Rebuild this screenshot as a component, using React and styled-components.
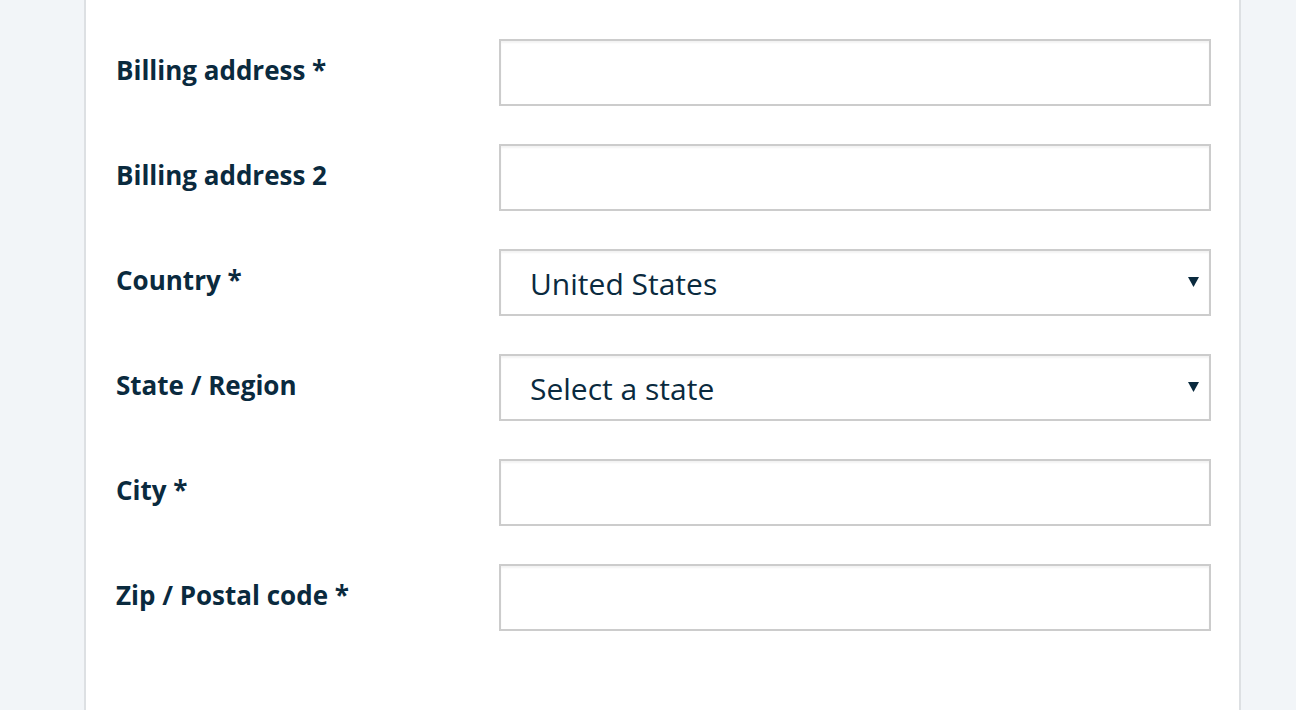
import React from 'react';
import styled, { createGlobalStyle } from 'styled-components';

const colors = {
    page: '#f2f5f8',
    card: '#ffffff',
    cardEdge: '#dde0e3',
    ink: '#0a2a3e',
    field: '#cccccc',
};

const GlobalStyle = createGlobalStyle`
    html, body {
        margin: 0;
        padding: 0;
        background: ${colors.page};
        font-family: "Open Sans", "Liberation Sans", sans-serif;
        color: ${colors.ink};
    }
`;

const fields = [
    { label: 'Billing address *', type: 'text' },
    { label: 'Billing address 2', type: 'text' },
    { label: 'Country *', type: 'select', value: 'United States' },
    { label: 'State / Region', type: 'select', value: 'Select a state' },
    { label: 'City *', type: 'text' },
    { label: 'Zip / Postal code *', type: 'text' },
];

const App = () => {
    return (
        <Page>
            <GlobalStyle />
            <Card>
                <Form>
                    {fields.map((f) => (
                        <Row key={f.label}>
                            <Label>{f.label}</Label>
                            {f.type === 'select' ? (
                                <SelectWrap>
                                    <Select defaultValue={f.value}>
                                        <option>{f.value}</option>
                                    </Select>
                                    <Arrow viewBox="0 0 11 11">
                                        <path d="M0 1 H11 L5.5 11 Z" fill={colors.ink} />
                                    </Arrow>
                                </SelectWrap>
                            ) : (
                                <Input type="text" />
                            )}
                        </Row>
                    ))}
                </Form>
            </Card>
        </Page>
    );
};

export default App;

const Page = styled.div`
    min-height: 710px;
    display: flex;
    padding-left: 84px;
`;

const Card = styled.div`
    width: 1157px;
    min-height: 710px;
    background: ${colors.card};
    border-left: 2px solid ${colors.cardEdge};
    border-right: 2px solid ${colors.cardEdge};
    padding: 39px 28px 0 30px;
    box-sizing: border-box;
`;

const Form = styled.div`
    display: flex;
    flex-direction: column;
    gap: 38px;
`;

const Row = styled.div`
    display: grid;
    grid-template-columns: 383px 712px;
    align-items: center;
`;

const Label = styled.label`
    font-size: 26px;
    font-weight: 700;
    margin-top: -5px;
`;

const fieldBox = `
    height: 67px;
    width: 712px;
    box-sizing: border-box;
    border: 2px solid ${colors.field};
    background: #fff;
    box-shadow: inset 0 2px 2px rgba(0, 0, 0, 0.05);
    font-family: "Open Sans", "Liberation Sans", sans-serif;
    color: ${colors.ink};
    outline: none;
    margin: 0;
`;

const Input = styled.input`
    ${fieldBox}
    padding: 0 30px;
    font-size: 30px;
`;

const SelectWrap = styled.div`
    position: relative;
    width: 712px;
    height: 67px;
`;

const Select = styled.select`
    ${fieldBox}
    appearance: none;
    -webkit-appearance: none;
    border-radius: 0;
    padding: 2px 50px 0 29px;
    font-size: 30px;
`;

const Arrow = styled.svg`
    position: absolute;
    right: 12px;
    top: 27px;
    width: 11px;
    height: 11px;
    pointer-events: none;
`;
